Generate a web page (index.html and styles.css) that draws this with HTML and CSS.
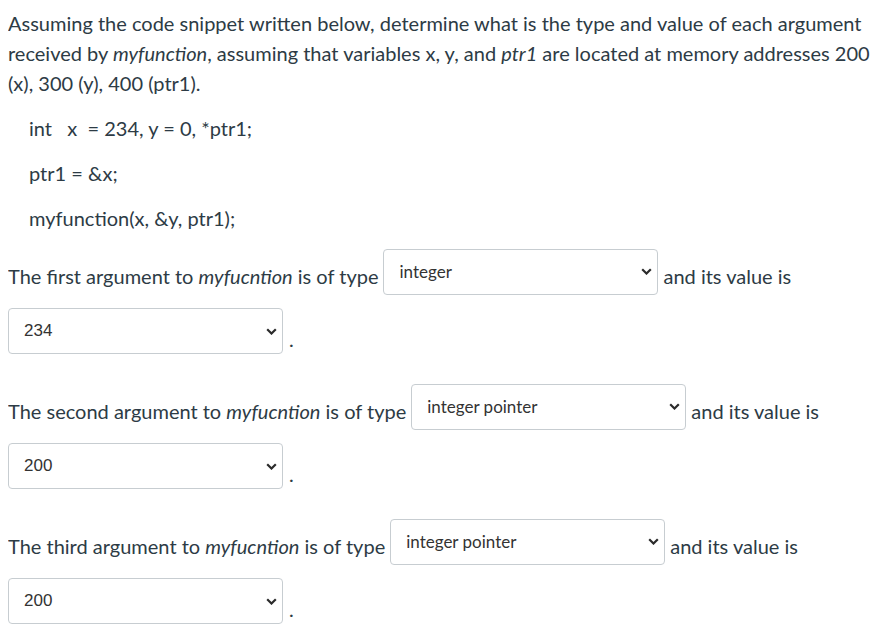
FILE: index.html
```html
<!DOCTYPE html>
<html>
<head>
<meta charset="utf-8">
<link rel="stylesheet" href="styles.css">
</head>
<body>
<p class="intro">Assuming the code snippet written below, determine what is the type and value of each argument received by <em>myfunction</em>, assuming that variables x, y, and <em>ptr1</em> are located at memory addresses 200 (x), 300 (y), 400 (ptr1).</p>
<p class="code">int&nbsp;&nbsp; x&nbsp; = 234, y = 0, *ptr1;</p>
<p class="code">ptr1 = &amp;x;</p>
<p class="code">myfunction(x, &amp;y, ptr1);</p>

<div class="q">
  <div class="row type-row">
    <span class="txt">The first argument to <em>myfucntion</em> is of type</span>
    <div class="select type"><span>integer</span><svg class="chev" width="11" height="7" viewBox="0 0 11 7"><path d="M1.2 1.2 L5.5 5.5 L9.8 1.2" fill="none" stroke="#2b2b2b" stroke-width="2.2"/></svg></div>
    <span class="txt">and its value is</span>
  </div>
  <div class="row value-row">
    <div class="select value"><span>234</span><svg class="chev" width="11" height="7" viewBox="0 0 11 7"><path d="M1.2 1.2 L5.5 5.5 L9.8 1.2" fill="none" stroke="#2b2b2b" stroke-width="2.2"/></svg></div>
    <span class="dot">.</span>
  </div>
</div>

<div class="q">
  <div class="row type-row">
    <span class="txt">The second argument to <em>myfucntion</em> is of type</span>
    <div class="select type"><span>integer pointer</span><svg class="chev" width="11" height="7" viewBox="0 0 11 7"><path d="M1.2 1.2 L5.5 5.5 L9.8 1.2" fill="none" stroke="#2b2b2b" stroke-width="2.2"/></svg></div>
    <span class="txt">and its value is</span>
  </div>
  <div class="row value-row">
    <div class="select value"><span>200</span><svg class="chev" width="11" height="7" viewBox="0 0 11 7"><path d="M1.2 1.2 L5.5 5.5 L9.8 1.2" fill="none" stroke="#2b2b2b" stroke-width="2.2"/></svg></div>
    <span class="dot">.</span>
  </div>
</div>

<div class="q">
  <div class="row type-row">
    <span class="txt">The third argument to <em>myfucntion</em> is of type</span>
    <div class="select type"><span>integer pointer</span><svg class="chev" width="11" height="7" viewBox="0 0 11 7"><path d="M1.2 1.2 L5.5 5.5 L9.8 1.2" fill="none" stroke="#2b2b2b" stroke-width="2.2"/></svg></div>
    <span class="txt">and its value is</span>
  </div>
  <div class="row value-row">
    <div class="select value"><span>200</span><svg class="chev" width="11" height="7" viewBox="0 0 11 7"><path d="M1.2 1.2 L5.5 5.5 L9.8 1.2" fill="none" stroke="#2b2b2b" stroke-width="2.2"/></svg></div>
    <span class="dot">.</span>
  </div>
</div>
</body>
</html>
```

FILE: styles.css
```css
html, body {
  background: #ffffff;
}
body {
  margin: 8px;
  font-family: Lato, "Open Sans", sans-serif;
  font-size: 20px;
  line-height: 30px;
  color: #2d3b45;
}
p {
  margin: 0;
}
.intro {
  margin-bottom: 15px;
}
.code {
  padding-left: 21px;
  margin-bottom: 15px;
}
.code:last-of-type {
  margin-bottom: 0;
}
.q {
  margin-top: 30px;
}
.code + .q {
  margin-top: 16px;
}
.row {
  display: flex;
  gap: 5px;
}
.type-row {
  align-items: flex-end;
}
.type-row .txt {
  margin-bottom: 4px;
}
.value-row {
  margin-top: 13px;
  align-items: flex-end;
}
.select {
  box-sizing: border-box;
  width: 275px;
  height: 46px;
  border: 1px solid #c7cdd1;
  border-radius: 4px;
  background: #fff;
  display: flex;
  justify-content: space-between;
  padding: 0 5px 0 15px;
  color: #333;
}
.select.type {
  align-items: flex-start;
  padding-top: 8px;
  font-family: Lato, sans-serif;
  font-size: 17px;
  line-height: 27px;
}
.select.type .chev {
  margin-top: 10px;
}
.select.value {
  align-items: center;
  font-family: "Liberation Sans", Arial, sans-serif;
  font-size: 17px;
  line-height: 20px;
}
.dot {
  line-height: 30px;
  margin-left: 1px;
  margin-bottom: 0;
}
```
